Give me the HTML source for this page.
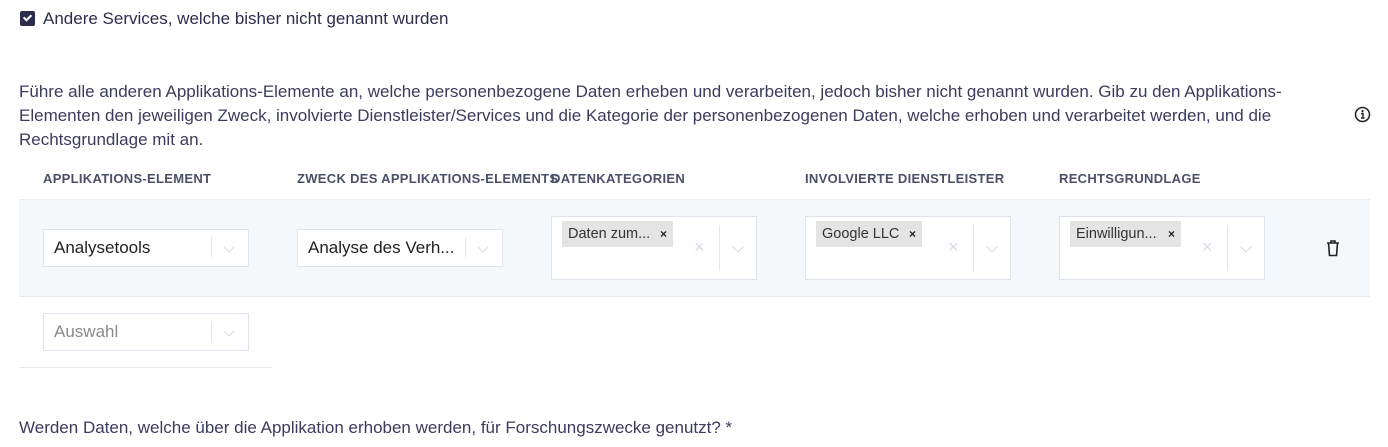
<!DOCTYPE html>
<html><head><meta charset="utf-8"><style>
*{box-sizing:border-box;margin:0;padding:0}
body{width:1388px;height:447px;background:#fff;font-family:"Liberation Sans",sans-serif;color:#2c2d4d;position:relative;overflow:hidden}
.a{position:absolute}
.t{font-size:17px;white-space:nowrap}
.h{font-size:13px;font-weight:bold;color:#4a5068;letter-spacing:0.3px;top:171px}
.sel{position:absolute;background:#fff;border:1px solid #dde4ee}
.sep{position:absolute;width:1px;background:#e3e7ee}
.chev{position:absolute;width:8px;height:8px;border-right:1.5px solid #d3d9e3;border-bottom:1.5px solid #d3d9e3;transform:rotate(45deg)}
.x{position:absolute;color:#d7dde6;font-size:18px}
.chip{position:absolute;background:#e4e4e4;font-size:14.5px;color:#333;height:26px;line-height:26px;padding-left:6px}
.chip b{position:absolute;right:6px;top:0;font-size:12px;color:#222}
</style></head><body>
<div class="a" style="left:20px;top:11px;width:15px;height:15px;background:#2c2d4d;border-radius:2px"></div>
<div class="a" style="left:25px;top:13px;width:5px;height:8px;border-right:2px solid #fff;border-bottom:2px solid #fff;transform:rotate(45deg)"></div>
<div class="a t" style="left:43px;top:9px">Andere Services, welche bisher nicht genannt wurden</div>
<div class="a" style="left:19px;top:80px;width:1320px;font-size:17px;line-height:24px;color:#3a3c5c;white-space:nowrap">Führe alle anderen Applikations-Elemente an, welche personenbezogene Daten erheben und verarbeiten, jedoch bisher nicht genannt wurden. Gib zu den Applikations-<br>Elementen den jeweiligen Zweck, involvierte Dienstleister/Services und die Kategorie der personenbezogenen Daten, welche erhoben und verarbeitet werden, und die<br>Rechtsgrundlage mit an.</div>
<svg class="a" style="left:1354px;top:106px" width="17" height="17" viewBox="0 0 17 17"><circle cx="8.5" cy="8.5" r="7" fill="none" stroke="#222" stroke-width="1.5"/><circle cx="8.5" cy="5" r="1.1" fill="#222"/><path d="M7 7.5h2v4.5M7 12h3.5" fill="none" stroke="#222" stroke-width="1.4"/></svg>
<div class="a h" style="left:43px">APPLIKATIONS-ELEMENT</div>
<div class="a h" style="left:297px">ZWECK DES APPLIKATIONS-ELEMENTS</div>
<div class="a h" style="left:551px">DATENKATEGORIEN</div>
<div class="a h" style="left:805px">INVOLVIERTE DIENSTLEISTER</div>
<div class="a h" style="left:1059px">RECHTSGRUNDLAGE</div>
<div class="a" style="left:19px;top:199px;width:1351px;height:98px;background:#f5f8fb;border-top:1px solid #e9eef4;border-bottom:1px solid #e6ebf1"></div>

<div class="sel" style="left:43px;top:229px;width:206px;height:38px"></div>
<div class="a t" style="left:54px;top:238px;color:#222">Analysetools</div>
<div class="sep" style="left:211px;top:237px;height:20px"></div>
<div class="chev" style="left:225px;top:243px"></div>

<div class="sel" style="left:297px;top:229px;width:206px;height:38px"></div>
<div class="a t" style="left:308px;top:238px;color:#222">Analyse des Verh...</div>
<div class="sep" style="left:465px;top:237px;height:20px"></div>
<div class="chev" style="left:479px;top:243px"></div>

<div class="sel" style="left:551px;top:216px;width:206px;height:64px"></div>
<div class="chip" style="left:562px;top:221px;width:111px">Daten zum...<b>×</b></div>
<div class="x" style="left:694px;top:237px">×</div>
<div class="sep" style="left:719px;top:225px;height:46px"></div>
<div class="chev" style="left:734px;top:243px"></div>

<div class="sel" style="left:805px;top:216px;width:206px;height:64px"></div>
<div class="chip" style="left:816px;top:221px;width:106px">Google LLC<b>×</b></div>
<div class="x" style="left:948px;top:237px">×</div>
<div class="sep" style="left:973px;top:225px;height:46px"></div>
<div class="chev" style="left:988px;top:243px"></div>

<div class="sel" style="left:1059px;top:216px;width:206px;height:64px"></div>
<div class="chip" style="left:1070px;top:221px;width:111px">Einwilligun...<b>×</b></div>
<div class="x" style="left:1202px;top:237px">×</div>
<div class="sep" style="left:1227px;top:225px;height:46px"></div>
<div class="chev" style="left:1242px;top:243px"></div>

<svg class="a" style="left:1325px;top:239px" width="16" height="18" viewBox="0 0 16 18"><path d="M2 4h12M6 4V2h4v2M3.5 4l1 12.5h7l1-12.5" fill="none" stroke="#222" stroke-width="1.6"/></svg>

<div class="sel" style="left:43px;top:313px;width:206px;height:38px"></div>
<div class="a t" style="left:54px;top:322px;color:#8a8a8a">Auswahl</div>
<div class="sep" style="left:211px;top:321px;height:20px"></div>
<div class="chev" style="left:225px;top:327px"></div>
<div class="a" style="left:19px;top:367px;width:253px;height:1px;background:#e6ebf1"></div>

<div class="a t" style="left:19px;top:418px;color:#3a3c5c">Werden Daten, welche über die Applikation erhoben werden, für Forschungszwecke genutzt? *</div>
</body></html>
